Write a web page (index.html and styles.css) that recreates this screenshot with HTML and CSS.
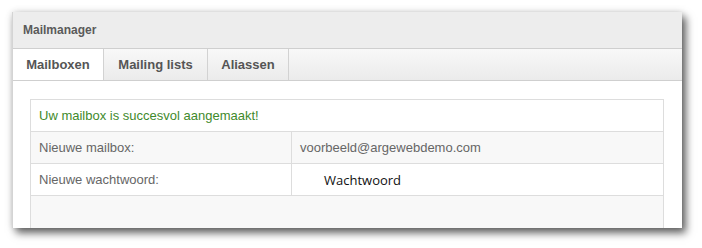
FILE: index.html
```html
<!DOCTYPE html>
<html>
<head>
<meta charset="utf-8">
<link rel="stylesheet" href="styles.css">
</head>
<body>
<div class="window">
  <div class="titlebar">Mailmanager</div>
  <div class="tabs">
    <div class="tab active">Mailboxen</div>
    <div class="tab">Mailing lists</div>
    <div class="tab">Aliassen</div>
    <div class="tab-fill"></div>
  </div>
  <div class="content">
    <div class="grid">
      <div class="row msg"><span>Uw mailbox is succesvol aangemaakt!</span></div>
      <div class="row alt">
        <div class="cell label">Nieuwe mailbox:</div>
        <div class="cell value">voorbeeld@argewebdemo.com</div>
      </div>
      <div class="row">
        <div class="cell label">Nieuwe wachtwoord:</div>
        <div class="cell value pw">Wachtwoord</div>
      </div>
      <div class="row alt empty"></div>
    </div>
  </div>
</div>
</body>
</html>
```
FILE: styles.css
```css
html, body {
  margin: 0;
  padding: 0;
  background: #ffffff;
}
body {
  font-family: "Liberation Sans", Arial, sans-serif;
  width: 702px;
  height: 248px;
  overflow: hidden;
}
.window {
  margin: 12px 0 0 12px;
  width: 670px;
  height: 216px;
  background: #ffffff;
  display: flex;
  flex-direction: column;
  overflow: hidden;
  box-shadow: 4px 5px 8px rgba(0,0,0,0.6), 0 0 7px rgba(0,0,0,0.15);
  border-left: 1px solid #d4d4d4;
  box-sizing: border-box;
}
.titlebar {
  height: 37px;
  background: #ededed;
  border-bottom: 1px solid #cfcfcf;
  box-sizing: border-box;
  display: flex;
  align-items: center;
  padding-left: 10px;
  font-size: 12px;
  font-weight: bold;
  color: #5a5a5a;
}
.tabs {
  height: 31px;
  display: flex;
  border-bottom: 1px solid #cfcfcf;
  box-sizing: content-box;
  background: linear-gradient(#f8f8f8, #ebebeb);
}
.tab {
  display: flex;
  align-items: center;
  justify-content: center;
  font-size: 13px;
  font-weight: bold;
  color: #555555;
  border-right: 1px solid #d2d2d2;
  background: linear-gradient(#f8f8f8, #ebebeb);
}
.tab:nth-child(1) { width: 90px; }
.tab:nth-child(2) { width: 103px; }
.tab:nth-child(3) { width: 80px; }
.tab.active {
  background: #ffffff;
}
.tab-fill { flex: 1; }
.content {
  flex: 1;
  padding: 18px 18px 0 17px;
}
.grid {
  border: 1px solid #dddddd;
  border-bottom: none;
  height: 100%;
  box-sizing: border-box;
  display: flex;
  flex-direction: column;
}
.row {
  height: 32px;
  display: flex;
  border-bottom: 1px solid #dddddd;
  box-sizing: border-box;
  font-size: 13px;
  color: #666666;
}
.row.alt { background: #f8f8f8; }
.row.msg {
  align-items: center;
  padding-left: 8px;
  color: #3f8a2c;
}
.row.empty {
  flex: 1;
  border-bottom: none;
}
.cell {
  display: flex;
  align-items: center;
}
.cell.label {
  width: 252px;
  padding-left: 8px;
  border-right: 1px solid #dddddd;
}
.cell.value {
  padding-left: 8px;
}
.cell.pw {
  padding-left: 32px;
  font-family: "Open Sans", "DejaVu Sans", sans-serif;
  font-size: 13px;
  color: #111111;
}
```
